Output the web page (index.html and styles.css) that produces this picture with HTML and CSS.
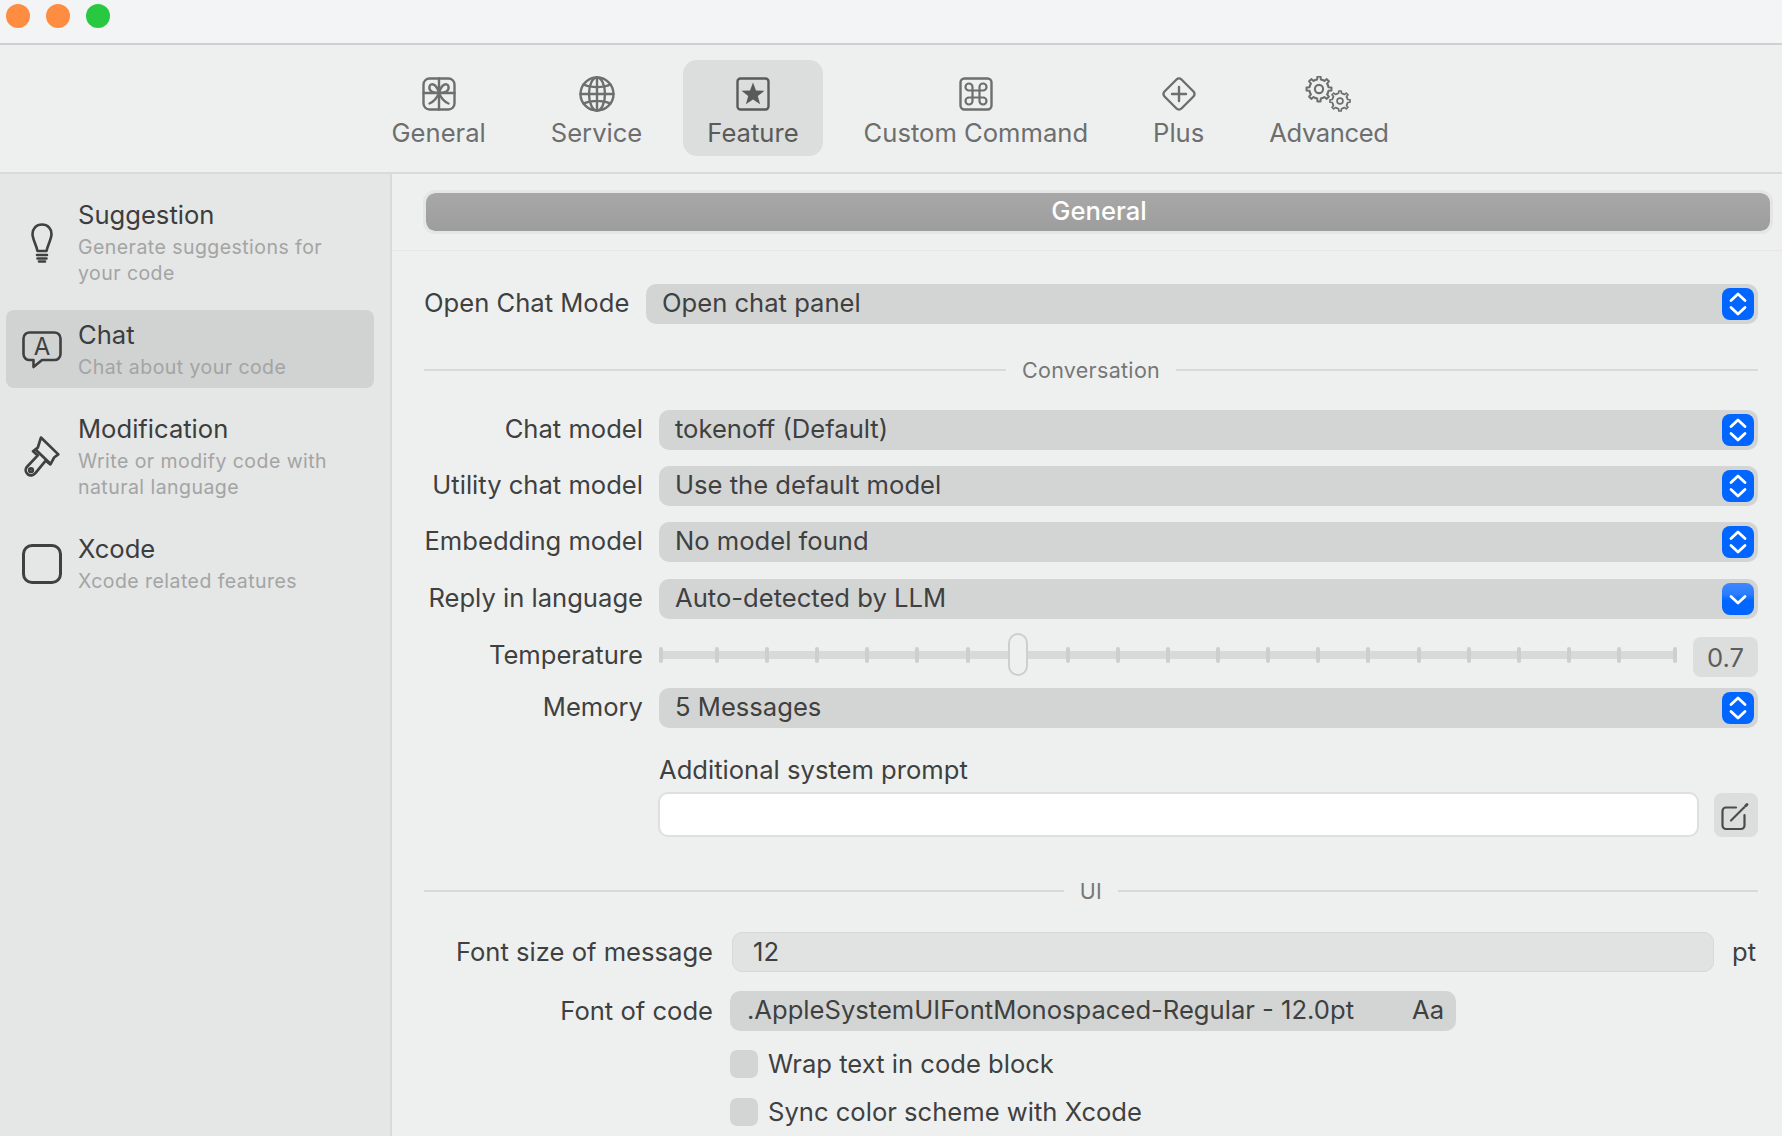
FILE: index.html
```html
<!DOCTYPE html>
<html lang="en">
<head>
<meta charset="utf-8">
<title>Feature Settings</title>
<link rel="stylesheet" href="styles.css">
</head>
<body>
<svg class="defs" aria-hidden="true">
  <defs>
    <path id="gt" d="M8.75 4.15L10.38 3.66L10.66 1.08L13.34 1.08L13.62 3.66L15.25 4.15"/>
    <g id="gear">
      <use href="#gt"/>
      <use href="#gt" transform="rotate(45 12 12)"/>
      <use href="#gt" transform="rotate(90 12 12)"/>
      <use href="#gt" transform="rotate(135 12 12)"/>
      <use href="#gt" transform="rotate(180 12 12)"/>
      <use href="#gt" transform="rotate(225 12 12)"/>
      <use href="#gt" transform="rotate(270 12 12)"/>
      <use href="#gt" transform="rotate(315 12 12)"/>
    </g>
    <symbol id="updown" viewBox="0 0 32 32"><path d="M9 12.500L16 6L23 12.500M9 19.500L16 26L23 19.500"/></symbol>
  </defs>
</svg>
<div class="app">
  <header class="titlebar">
    <span class="light light-orange"></span>
    <span class="light light-orange"></span>
    <span class="light light-green"></span>
  </header>

  <nav class="toolbar">
    <div class="tab">
      <svg class="tab-icon" viewBox="0 0 36 36"><rect x="2.500" y="2.500" width="31" height="31" rx="6"/><path d="M18 2.500V33.500M2.500 17H33.500"/><path d="M18 17C12 17 7.500 15 8.500 10.500C9.500 6.500 15.500 7.500 18 17C20.500 7.500 26.500 6.500 27.500 10.500C28.500 15 24 17 18 17ZM18 17C16 22 13 25.500 8.500 27.500M18 17C20 22 23 25.500 27.500 27.500"/></svg>
      <span>General</span>
    </div>
    <div class="tab">
      <svg class="tab-icon" viewBox="0 0 36 36"><circle cx="18" cy="18" r="16.500"/><ellipse cx="18" cy="18" rx="8" ry="16.500"/><path d="M18 1.500V34.500M1.500 18H34.500M4.500 8.500C12 12 24 12 31.500 8.500M4.500 27.500C12 24 24 24 31.500 27.500"/></svg>
      <span>Service</span>
    </div>
    <div class="tab tab-active">
      <svg class="tab-icon" viewBox="0 0 36 36"><rect x="2.500" y="2.500" width="31" height="31" rx="3"/><path class="solid" d="M18 6.500L21 14.500L29.500 14.800L22.800 20L25.100 28.200L18 23.500L10.900 28.200L13.200 20L6.500 14.800L15 14.500Z"/></svg>
      <span>Feature</span>
    </div>
    <div class="tab">
      <svg class="tab-icon" viewBox="0 0 36 36"><rect x="2.500" y="2.500" width="31" height="31" rx="4"/><path class="thin" d="M21.500 11V25A3.500 3.500 0 1 0 25 21.500H11A3.500 3.500 0 1 0 14.500 25V11A3.500 3.500 0 1 0 11 14.500H25A3.500 3.500 0 1 0 21.500 11"/></svg>
      <span>Custom Command</span>
    </div>
    <div class="tab">
      <svg class="tab-icon" viewBox="0 0 36 36"><rect x="6" y="6" width="24" height="24" rx="3.500" transform="rotate(45 18 18)"/><path d="M18 11V25M11 18H25"/></svg>
      <span>Plus</span>
    </div>
    <div class="tab tab-tight">
      <svg class="tab-icon tab-icon-wide gears" viewBox="0 0 48 36">
        <g transform="translate(14 13) scale(1.14) translate(-12 -12)"><use href="#gear"/><circle cx="12" cy="12" r="3.600"/></g>
        <g transform="translate(35 25) scale(.92) translate(-12 -12)"><use href="#gear"/><circle cx="12" cy="12" r="3.200"/></g>
      </svg>
      <span>Advanced</span>
    </div>
  </nav>

  <div class="body">
    <aside class="sidebar">
      <div class="item">
        <div class="item-icon"><svg class="ico-bulb" viewBox="0 0 22 40"><path d="M11 1.500C5 1.500 1.500 6 1.500 11C1.500 16 5 21 6.500 28H15.500C17 21 20.500 16 20.500 11C20.500 6 17 1.500 11 1.500Z"/><path d="M6 32H16M6.500 35.500H15.500M8 38.500H14"/></svg></div>
        <div class="item-text"><div class="item-title">Suggestion</div><div class="item-sub">Generate suggestions for your code</div></div>
      </div>
      <div class="item item-active">
        <div class="item-icon"><svg class="ico-chat" viewBox="0 0 40 38"><path d="M8 1.500H32A6 6 0 0 1 38.500 7.500V23A6 6 0 0 1 32 29H20L11.500 36V29H8A6 6 0 0 1 1.500 23V7.500A6 6 0 0 1 8 1.500Z"/><text class="ico-letter" x="20" y="24">A</text></svg></div>
        <div class="item-text"><div class="item-title">Chat</div><div class="item-sub">Chat about your code</div></div>
      </div>
      <div class="item">
        <div class="item-icon"><svg class="ico-brush" viewBox="0 0 34 40"><path d="M16 1.500L32.500 17.500L28.500 20.500L25 27L20.500 23.500L10.500 35.500A5 5 0 0 1 2.500 29.500L13 18.500L8.500 14.500L13 11Z"/><path d="M11 13L24 25.500"/><circle cx="6.500" cy="32.500" r="1.700"/></svg></div>
        <div class="item-text"><div class="item-title">Modification</div><div class="item-sub">Write or modify code with natural language</div></div>
      </div>
      <div class="item">
        <div class="item-icon"><span class="ico-square"></span></div>
        <div class="item-text"><div class="item-title">Xcode</div><div class="item-sub">Xcode related features</div></div>
      </div>
    </aside>

    <main class="main">
      <div class="head"><div class="head-bar">General</div></div>
      <div class="form">
        <div class="row row-open">
          <span class="label-open">Open Chat Mode</span>
          <div class="select"><span class="select-text">Open chat panel</span><span class="stepper"><svg viewBox="0 0 32 32"><use href="#updown"/></svg></span></div>
        </div>

        <div class="divider divider-conv"><i></i><span>Conversation</span><i></i></div>

        <div class="row row-first">
          <span class="label">Chat model</span>
          <div class="select"><span class="select-text">tokenoff (Default)</span><span class="stepper"><svg viewBox="0 0 32 32"><use href="#updown"/></svg></span></div>
        </div>
        <div class="row">
          <span class="label">Utility chat model</span>
          <div class="select"><span class="select-text">Use the default model</span><span class="stepper"><svg viewBox="0 0 32 32"><use href="#updown"/></svg></span></div>
        </div>
        <div class="row">
          <span class="label">Embedding model</span>
          <div class="select"><span class="select-text">No model found</span><span class="stepper"><svg viewBox="0 0 32 32"><use href="#updown"/></svg></span></div>
        </div>
        <div class="row row-reply">
          <span class="label">Reply in language</span>
          <div class="select"><span class="select-text">Auto-detected by LLM</span><span class="stepper stepper-down"><svg viewBox="0 0 32 32"><path d="M9 13.500L16 20L23 13.500"/></svg></span></div>
        </div>
        <div class="row row-slider">
          <span class="label label-temp">Temperature</span>
          <div class="slider">
            <div class="track">
              <i class="tick"></i>
              <div class="inner-ticks"><i class="tick"></i><i class="tick"></i><i class="tick"></i><i class="tick"></i><i class="tick"></i><i class="tick"></i><i class="tick"></i><i class="tick"></i><i class="tick"></i><i class="tick"></i><i class="tick"></i><i class="tick"></i><i class="tick"></i><i class="tick"></i><i class="tick"></i><i class="tick"></i><i class="tick"></i><i class="tick"></i><i class="tick"></i></div>
              <i class="tick"></i>
              <span class="thumb"></span>
            </div>
            <span class="value">0.7</span>
          </div>
        </div>
        <div class="row row-memory">
          <span class="label">Memory</span>
          <div class="select"><span class="select-text">5 Messages</span><span class="stepper"><svg viewBox="0 0 32 32"><use href="#updown"/></svg></span></div>
        </div>

        <div class="prompt">
          <div class="prompt-label">Additional system prompt</div>
          <div class="prompt-row">
            <div class="prompt-input"></div>
            <span class="edit"><svg viewBox="0 0 44 44"><path d="M22 14.500H12A3.500 3.500 0 0 0 8.500 18V32.500A3.500 3.500 0 0 0 12 36H27A3.500 3.500 0 0 0 30.500 32.500V22"/><path d="M17 27.500L30 14.500"/><path class="pen-tip" d="M31.500 13L33 11.500"/></svg></span>
          </div>
        </div>

        <div class="divider divider-ui"><i></i><span>UI</span><i></i></div>

        <div class="row row-size">
          <span class="label-wide">Font size of message</span>
          <div class="num-field">12</div>
          <span class="unit">pt</span>
        </div>
        <div class="row row-code">
          <span class="label-wide">Font of code</span>
          <div class="font-field"><span class="select-text">.AppleSystemUIFontMonospaced-Regular - 12.0pt</span><span class="select-text">Aa</span></div>
        </div>
        <div class="check check-first"><span class="box"></span><span>Wrap text in code block</span></div>
        <div class="check"><span class="box"></span><span>Sync color scheme with Xcode</span></div>
      </div>
    </main>
  </div>
</div>
</body>
</html>
```

FILE: styles.css
```css
* { box-sizing: border-box; }
html, body { margin: 0; height: 100%; overflow: hidden; }
body {
  font-family: Inter, "Noto Sans", "Liberation Sans", sans-serif;
  font-size: 25.600px;
  color: #3f4040;
  background: #eef0ef;
}
.defs { position: absolute; width: 0; height: 0; }
.defs path { fill: none; stroke-linejoin: round; stroke-linecap: round; }

.app { display: flex; flex-direction: column; height: 1136px; }

/* title bar */
.titlebar {
  height: 45px;
  display: flex;
  gap: 16px;
  padding: 4px 6px 0;
  background: #f3f4f6;
  border-bottom: 2px solid #cfd1d0;
  flex: none;
}
.light { width: 24px; height: 24px; border-radius: 50%; }
.light-orange { background: #ff8d41; }
.light-green { background: #28c940; }

/* toolbar */
.toolbar {
  height: 129px;
  flex: none;
  display: flex;
  justify-content: center;
  gap: 17px;
  padding: 15px 2px 0 0;
  background: #eef0ef;
  border-bottom: 2px solid #d9dbda;
}
.tab {
  height: 96px;
  padding: 16px 24px 0;
  display: flex;
  flex-direction: column;
  align-items: center;
  border-radius: 14px;
  color: #6d6e6e;
  line-height: 34px;
}
.tab-active { background: #dcdddd; color: #595a5a; }
.tab-tight { letter-spacing: -.4px; }
.tab-icon {
  width: 36px;
  height: 36px;
  margin-bottom: 4px;
  fill: none;
  stroke: currentColor;
  stroke-width: 2.400;
  stroke-linejoin: round;
  stroke-linecap: round;
  display: block;
}
.tab-icon-wide { width: 48px; }
.tab-icon .thin { stroke-width: 2.200; }
.tab-icon .solid { fill: currentColor; stroke: none; }
.gears { stroke-width: 1.800; }

/* layout */
.body { flex: 1; display: flex; min-height: 0; }

/* sidebar */
.sidebar {
  width: 392px;
  flex: none;
  padding: 16px 16px 0 6px;
  background: #e5e6e6;
  border-right: 2px solid #d9dbda;
  display: flex;
  flex-direction: column;
  gap: 16px;
}
.item {
  display: flex;
  align-items: center;
  gap: 16px;
  padding: 9px 16px 8px;
  border-radius: 8px;
}
.item-active { background: #d1d2d2; }
.item-icon {
  width: 40px;
  flex: none;
  display: flex;
  justify-content: center;
  align-items: center;
}
.item-icon svg {
  display: block;
  fill: none;
  stroke: #3f4040;
  stroke-width: 2.600;
  stroke-linejoin: round;
  stroke-linecap: round;
}
.ico-bulb { width: 22px; height: 40px; }
.ico-chat { width: 40px; height: 38px; }
.ico-brush { width: 36px; height: 42px; }
.item-icon .ico-letter {
  font-family: Inter, sans-serif;
  font-size: 24px;
  fill: #3f4040;
  stroke: none;
  text-anchor: middle;
}
.ico-square {
  display: block;
  width: 40px;
  height: 40px;
  border: 3.500px solid #3f4040;
  border-radius: 10px;
}
.item-text { flex: 1; min-width: 0; }
.item-title { font-size: 25.600px; line-height: 32px; color: #3c3d3d; }
.item-sub {
  font-size: 19.500px;
  line-height: 26px;
  margin-top: 3px;
  color: #a3a4a4;
  letter-spacing: .45px;
}

/* main */
.main { flex: 1; min-width: 0; }
.head {
  height: 77px;
  padding: 16px 9px 16px 31px;
  border-bottom: 1px solid #e5e6e5;
}
.head-bar {
  height: 44px;
  border: 3px solid #e4e5e4;
  border-radius: 12px;
  background: linear-gradient(#a7a8a7, #9c9d9c);
  background-clip: padding-box;
  color: #fff;
  font-size: 25.600px;
  font-weight: 500;
  line-height: 36px;
  text-align: center;
  padding-left: 2px;
}
.form { padding: 33px 24px 0 32px; }

.row { display: flex; align-items: center; gap: 16px; margin-top: 16px; }
.row-open { margin-top: 0; gap: 18px; }
.row-first { margin-top: 28px; }
.row-reply { margin-top: 17px; }
.row-memory { margin-top: 11px; }
.label-open { white-space: nowrap; width: 204px; flex: none; margin-bottom: 3px; }
.label { width: 219px; flex: none; text-align: right; white-space: nowrap; margin-bottom: 3px; }
.label-temp { margin-bottom: 4px; }
.select-text { margin-bottom: 3px; }
.select {
  flex: 1;
  height: 40px;
  display: flex;
  justify-content: space-between;
  align-items: center;
  padding: 0 4px 0 16px;
  background: #d3d5d4;
  border-radius: 10px;
}
.stepper {
  width: 32px;
  height: 32px;
  border-radius: 8px;
  background: #0066ff;
  flex: none;
}
.stepper svg {
  display: block;
  width: 32px;
  height: 32px;
  fill: none;
  stroke: #fff;
  stroke-width: 2.800;
  stroke-linecap: round;
  stroke-linejoin: round;
}
.stepper-down { background: linear-gradient(#3f88ff 0, #2b7cff 35%, #0066ff 55%); }

/* dividers */
.divider {
  height: 24px;
  display: flex;
  align-items: center;
  gap: 16px;
  color: #767777;
  font-size: 21.500px;
  letter-spacing: .3px;
}
.divider i { flex: 1; height: 2px; background: #d8d9d9; }
.divider-conv { margin-top: 34px; }
.divider-ui { margin-top: 42px; }

/* slider */
.row-slider { height: 42px; }
.slider { flex: 1; display: flex; align-items: center; gap: 16px; }
.track {
  position: relative;
  flex: 1;
  height: 8px;
  margin-bottom: 2px;
  background: #d8dad9;
  display: flex;
  justify-content: space-between;
  align-items: center;
}
.inner-ticks { width: 906px; display: flex; justify-content: space-between; align-items: center; }
.tick { width: 4px; height: 16px; border-radius: 2px; background: #cdcfce; flex: none; }
.thumb {
  position: absolute;
  left: 349px;
  top: -18px;
  width: 20px;
  height: 43px;
  border: 2px solid #cdcfce;
  border-radius: 10px;
  background: #eef0ef;
}
.value {
  width: 65px;
  height: 40px;
  flex: none;
  border-radius: 8px;
  background: #dcdedd;
  color: #5c5d5d;
  text-align: center;
  line-height: 41px;
  margin-top: 2px;
}

/* prompt */
.prompt { margin: 26px 0 0 235px; }
.prompt-label { line-height: 32px; }
.prompt-row { display: flex; gap: 15px; margin-top: 6px; align-items: flex-end; }
.prompt-input {
  flex: 1;
  height: 45px;
  margin-left: -1px;
  background: #fff;
  border: 2px solid #dedfde;
  border-radius: 10px;
}
.edit {
  width: 44px;
  height: 44px;
  flex: none;
  border-radius: 8px;
  background: #dcdedd;
}
.edit svg {
  display: block;
  width: 44px;
  height: 44px;
  fill: none;
  stroke: #4a4b4b;
  stroke-width: 2.200;
  stroke-linecap: round;
}
.edit .pen-tip { stroke-width: 2.800; }

/* ui section */
.label-wide { width: 289px; flex: none; text-align: right; white-space: nowrap; margin-bottom: 2px; }
.row-size { margin-top: 29px; gap: 19px; }
.num-field {
  flex: 1;
  height: 40px;
  padding-left: 20px;
  line-height: 38px;
  background: #e1e3e2;
  border: 1px solid #d7d9d8;
  border-radius: 10px;
}
.unit { width: 26px; flex: none; margin-left: -1px; margin-bottom: 2px; }
.row-code { margin-top: 19px; gap: 17px; }
.font-field {
  width: 726px;
  height: 40px;
  padding: 0 12px 0 17px;
  display: flex;
  justify-content: space-between;
  align-items: center;
  background: #d3d5d4;
  border-radius: 10px;
  white-space: nowrap;
}
.check {
  display: flex;
  align-items: center;
  gap: 10px;
  height: 28px;
  line-height: 26px;
  margin: 20px 0 0 306px;
}
.check-first { margin-top: 19px; }
.box { width: 28px; height: 28px; border-radius: 7px; background: #d3d5d4; flex: none; }
```
